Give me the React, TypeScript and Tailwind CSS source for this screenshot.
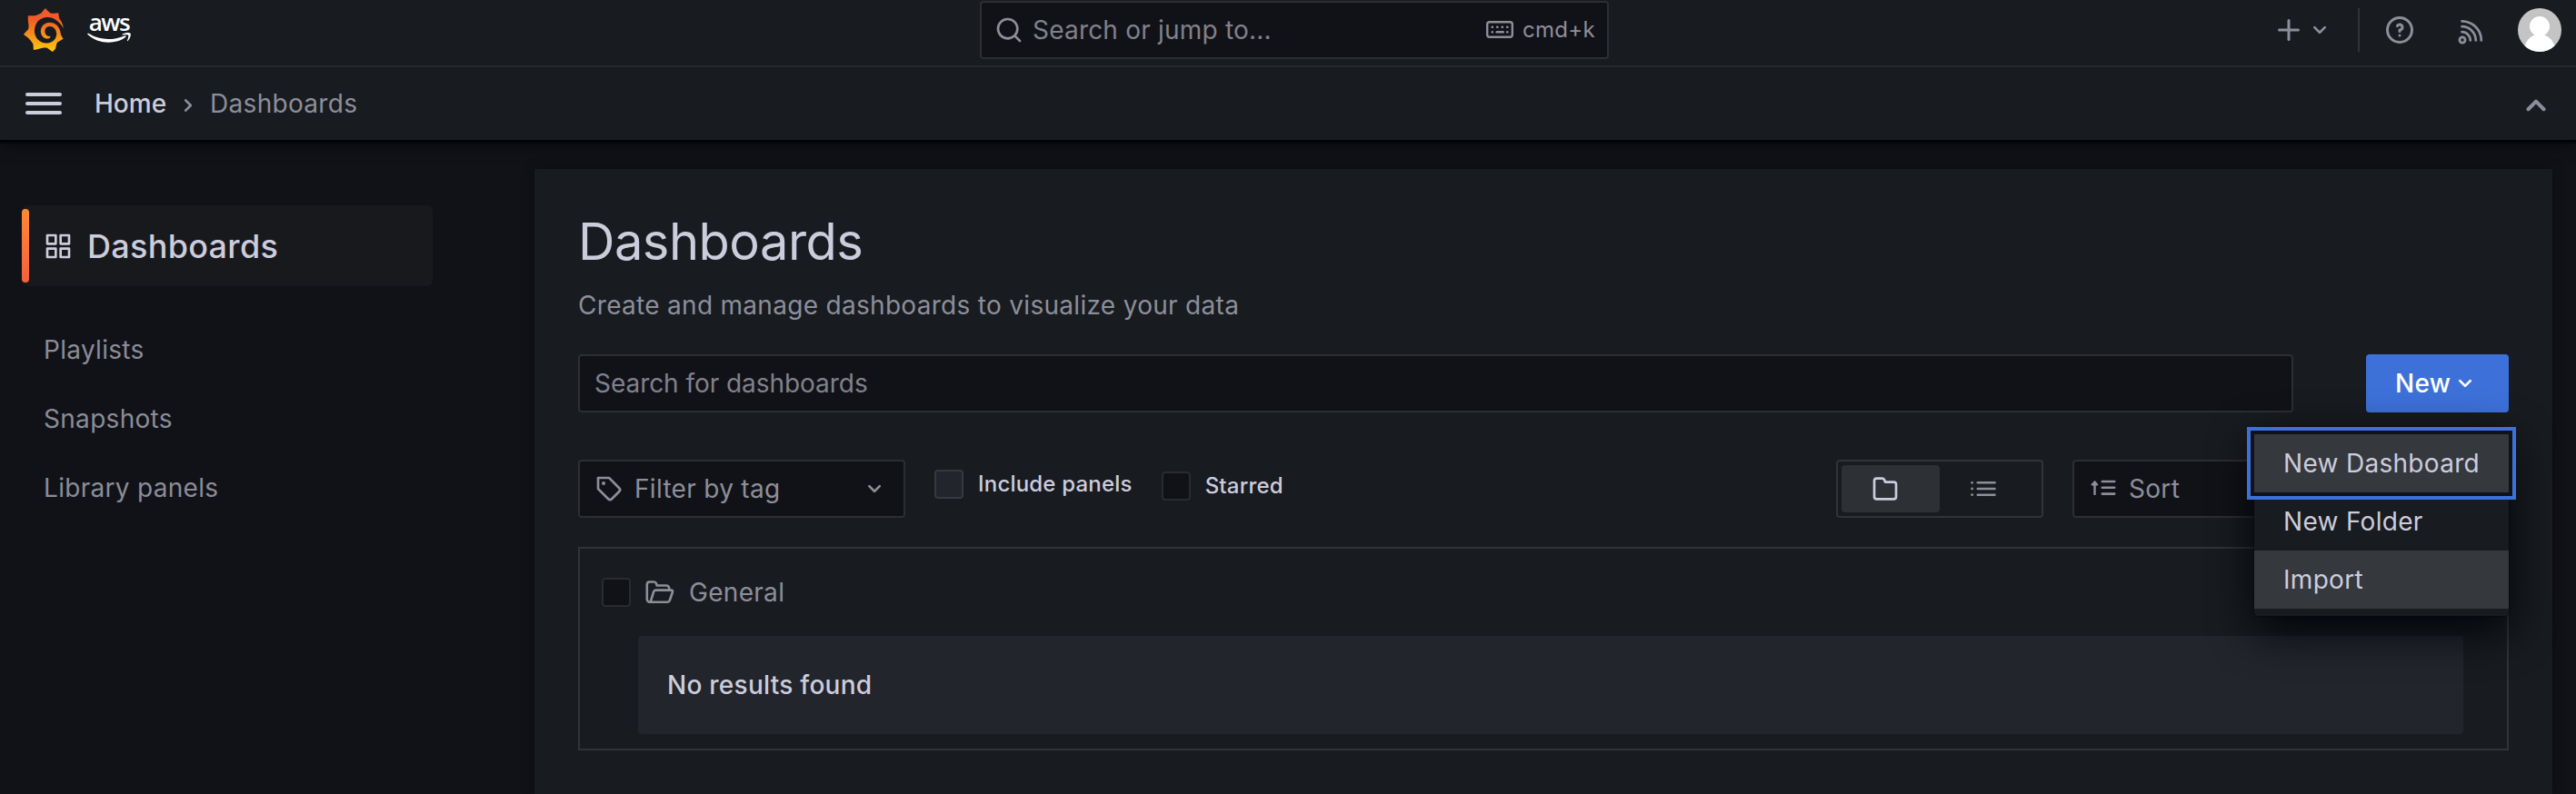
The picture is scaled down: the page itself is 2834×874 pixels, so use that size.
import React from "react";

function Uil({ d, size, className = "" }: { d: string; size: number; className?: string }) {
  return (
    <svg viewBox="0 0 24 24" width={size} height={size} fill="currentColor" className={"shrink-0 " + className}>
      <path d={d} />
    </svg>
  );
}

const P = {
  down: "M17,9.17a1,1,0,0,0-1.41,0L12,12.71,8.46,9.17a1,1,0,0,0-1.41,0,1,1,0,0,0,0,1.42l4.24,4.24a1,1,0,0,0,1.42,0L17,10.59A1,1,0,0,0,17,9.17Z",
  up: "M17,13.41,12.71,9.17a1,1,0,0,0-1.42,0L7.05,13.41a1,1,0,0,0,0,1.42,1,1,0,0,0,1.41,0L12,11.29l3.54,3.54a1,1,0,0,0,.7.29,1,1,0,0,0,.71-.29A1,1,0,0,0,17,13.41Z",
  right: "M14.83,11.29,10.59,7.05a1,1,0,0,0-1.42,0,1,1,0,0,0,0,1.41L12.71,12,9.17,15.54a1,1,0,0,0,0,1.41,1,1,0,0,0,.71.29,1,1,0,0,0,.71-.29l4.24-4.24A1,1,0,0,0,14.83,11.29Z",
  search: "M21.71,20.29,18,16.61A9,9,0,1,0,16.61,18l3.68,3.68a1,1,0,0,0,1.42,0A1,1,0,0,0,21.71,20.29ZM11,18a7,7,0,1,1,7-7A7,7,0,0,1,11,18Z",
  plus: "M19,11H13V5a1,1,0,0,0-2,0v6H5a1,1,0,0,0,0,2h6v6a1,1,0,0,0,2,0V13h6a1,1,0,0,0,0-2Z",
  question: "M11.29,15.29a1.58,1.58,0,0,0-.12.15.76.76,0,0,0-.09.18.64.64,0,0,0-.06.18,1.36,1.36,0,0,0,0,.2.84.84,0,0,0,.08.38.9.9,0,0,0,.54.54.94.94,0,0,0,.76,0,.9.9,0,0,0,.54-.54A1,1,0,0,0,13,16a1,1,0,0,0-.29-.71A1,1,0,0,0,11.29,15.29ZM12,2A10,10,0,1,0,22,12,10,10,0,0,0,12,2Zm0,18a8,8,0,1,1,8-8A8,8,0,0,1,12,20ZM12,7A3,3,0,0,0,9.4,8.5a1,1,0,1,0,1.73,1A1,1,0,0,1,12,9a1,1,0,0,1,0,2,1,1,0,0,0-1,1v1a1,1,0,0,0,2,0v-.18A3,3,0,0,0,12,7Z",
  apps: "M10,13H3a1,1,0,0,0-1,1v7a1,1,0,0,0,1,1h7a1,1,0,0,0,1-1V14A1,1,0,0,0,10,13ZM9,20H4V15H9ZM21,2H14a1,1,0,0,0-1,1v7a1,1,0,0,0,1,1h7a1,1,0,0,0,1-1V3A1,1,0,0,0,21,2ZM20,9H15V4h5Zm1,4H14a1,1,0,0,0-1,1v7a1,1,0,0,0,1,1h7a1,1,0,0,0,1-1V14A1,1,0,0,0,21,13Zm-1,7H15V15h5ZM10,2H3A1,1,0,0,0,2,3v7a1,1,0,0,0,1,1h7a1,1,0,0,0,1-1V3A1,1,0,0,0,10,2ZM9,9H4V4H9Z",
  tag: "M7.5,6A1.5,1.5,0,1,0,9,7.5,1.5,1.5,0,0,0,7.5,6Zm13.62,4.71L12.71,2.29A1,1,0,0,0,12,2H3A1,1,0,0,0,2,3v9a1,1,0,0,0,.29.71l8.42,8.41a3,3,0,0,0,4.24,0L21.12,15a3,3,0,0,0,0-4.24Zm-1.41,2.82h0l-6.18,6.17a1,1,0,0,1-1.41,0L4,11.59V4h7.59l8.12,8.12a1,1,0,0,1,.29.71A1,1,0,0,1,19.71,13.53Z",
  folder: "M19,5.5H12.72l-.32-1a3,3,0,0,0-2.84-2H5a3,3,0,0,0-3,3v13a3,3,0,0,0,3,3H19a3,3,0,0,0,3-3V8.5A3,3,0,0,0,19,5.5Zm1,13a1,1,0,0,1-1,1H5a1,1,0,0,1-1-1V5.5a1,1,0,0,1,1-1H9.56a1,1,0,0,1,.95.68l.54,1.64A1,1,0,0,0,12,7.5h7a1,1,0,0,1,1,1Z",
};

function GrafanaLogo() {
  return (
    <svg viewBox="0 0 44 48" width="44" height="48" className="shrink-0">
      <defs>
        <linearGradient id="sun" x1="0" y1="48" x2="0" y2="0" gradientUnits="userSpaceOnUse">
          <stop offset="0" stopColor="#FCCA0A" />
          <stop offset="0.75" stopColor="#F15A29" />
          <stop offset="1" stopColor="#F05A28" />
        </linearGradient>
      </defs>
      <path
        fill="url(#sun)"
        d="M24 0 C25.5 2 27.5 4 29.8 5.5 C32.5 6 35.5 5.6 38.4 5.2 C38.6 8 38.8 10 39.6 12 C41.4 14 43.4 18 44 22.5 C42.8 20 40.5 17 37.5 14.6 C33 10.6 27.5 9.3 22.5 10.6 C15 12.5 11.8 19 12 26 C12.3 33 18 38.2 25 38.5 C32 38.7 36.4 33.5 36.2 28 C36 23 32.6 20 28.6 20 C25 20 23.200 22.800 23.400 26 C23.600 29.500 26 31.400 29.200 30.800 C30 32 28.8 33.600 26.5 33.600 C22 33.400 18.8 29.8 18.8 25.4 C18.8 20 23 15.700 28.6 15.700 C35 15.700 39.5 20.4 40.5 26.4 C40.8 29 41.6 31 43.6 33.6 C41.6 35.4 39 36.4 37 37.8 C36 40 35.6 42 35.2 44.4 L32 48 C29.6 46.8 27.6 45 25.2 43.6 C22.5 43.2 19 44 17 44.8 C15 45.4 13 45.6 10.8 46 C10.8 43.5 10.8 41.5 10.2 39 C8.6 36.5 6.8 34.5 4.8 32.6 L0 29 C1.6 26.6 3.6 25 5.2 23 C5.8 20.6 5.6 18 5 15.6 C4.8 13 4.8 10.6 4.8 8.4 C7.6 8.2 10 8.4 12.6 8.2 C15 7.6 17.2 6.6 19.2 5.4 C20.8 3.8 22 1.8 24 0 Z"
      />
    </svg>
  );
}

function AwsLogo() {
  return (
    <div className="flex h-[30px] w-[48px] flex-col items-center">
      <span className="mt-[-6px] h-[24px] font-['Open_Sans',sans-serif] text-[26px] leading-[24px] font-semibold tracking-[-1.5px] text-white">aws</span>
      <svg viewBox="0 0 48 12" width="48" height="12" className="shrink-0">
        <path fill="#fff" d="M0.3 1.2C0.6 0.6 1.2 0.7 1.8 1.1C14 8.6 28 8.6 41 3.4C42.4 2.9 43.2 4 42 5C32 12.600 13 13.500 0.800 2.300C0.300 1.900 0.100 1.600 0.300 1.200Z" />
        <path fill="#fff" d="M38.500 1.700C41.500 -0.300 46.500 -0.300 47.500 0.700C48.500 2 47 7 44.600 9C44 9.400 43.600 9.100 43.900 8.500C44.800 6.500 45.700 3.500 45.200 2.700C44.600 2 41.500 2.200 39 2.500C38.200 2.500 37.900 2.100 38.500 1.700Z" />
      </svg>
    </div>
  );
}

function Keyboard() {
  return (
    <svg viewBox="0 0 30 20" width="30" height="20" className="shrink-0" fill="currentColor">
      <rect x="1.200" y="1.200" width="27.600" height="16.600" rx="2.500" fill="none" stroke="currentColor" strokeWidth="2.400" />
      {[6, 11.5, 17, 22.5].map((x) => (
        <rect key={x} x={x - 0.500} y="5.500" width="2.600" height="2.600" rx="1.200" />
      ))}
      <rect x="5.500" y="11" width="2.600" height="2.600" rx="1.200" />
      <rect x="10.500" y="11" width="9.500" height="2.600" rx="1.200" />
      <rect x="22" y="11" width="2.600" height="2.600" rx="1.200" />
    </svg>
  );
}

function Rss() {
  return (
    <svg viewBox="0 0 28 28" width="28" height="28" fill="none" stroke="currentColor" strokeWidth="2.700" strokeLinecap="round" className="shrink-0">
      <circle cx="5" cy="23" r="3.100" />
      <path d="M4.500 2.300A21.300 21.300 0 0 1 25.800 23.500M4.500 8.200A15.300 15.300 0 0 1 19.800 23.500M4.500 14.200A9.300 9.300 0 0 1 13.800 23.500" />
    </svg>
  );
}

function FolderOpen() {
  return (
    <svg viewBox="0 0 32 26" width="32" height="26" fill="none" stroke="currentColor" strokeWidth="2.600" strokeLinejoin="round" className="shrink-0">
      <path d="M5 23.700C3 23.700 1.800 22.500 1.800 20.500V4.500C1.800 2.800 3 1.500 4.700 1.500H9.500C10.700 1.500 11.600 2.200 12 3.300L12.700 5.500H23C24.800 5.500 26.200 6.800 26.200 8.500V10.500" />
      <path d="M5 23.700H24C25.500 23.700 26.500 22.900 26.900 21.500L30 12.500C30.300 11.400 29.800 10.600 28.600 10.600H11.500C10.300 10.600 9.500 11.200 9.100 12.300L6 22.500C5.800 23.300 5.500 23.700 5 23.700Z" />
    </svg>
  );
}

function ListIcon() {
  return (
    <svg viewBox="0 0 28 18" width="28" height="18" fill="currentColor" className="shrink-0">
      {[1, 7.700, 14.400].map((y) => (
        <g key={y}>
          <circle cx="1.600" cy={y + 1.300} r="1.400" />
          <rect x="6.500" y={y} width="21.300" height="2.600" rx="1.300" />
        </g>
      ))}
    </svg>
  );
}

function SortIcon() {
  return (
    <svg viewBox="0 0 28 18" width="28" height="18" fill="currentColor" className="shrink-0">
      <path d="M3.300 6.500H1.600C0.500 6.500 0.200 5.400 0.900 4.700L3.700 1.700C4.200 1.100 4.900 1.100 5.400 1.700L7.900 4.700C8.600 5.400 8.200 6.500 7.200 6.500H5.700V15.900C5.700 17.500 3.300 17.500 3.300 15.900Z" />
      <rect x="11.500" y="0.700" width="16" height="2.600" rx="1.300" />
      <rect x="11.500" y="7.500" width="16" height="2.600" rx="1.300" />
      <rect x="11.500" y="14.300" width="16" height="2.600" rx="1.300" />
    </svg>
  );
}

function Avatar() {
  return (
    <svg viewBox="0 0 48 48" width="48" height="48" className="shrink-0 rounded-full">
      <rect width="48" height="48" fill="#c4c4c4" />
      <circle cx="24" cy="20" r="11" fill="#fff" />
      <path d="M7 43C10 34 15 29 24 29S38 34 41 43L41 48H7Z" fill="#fff" />
    </svg>
  );
}

function Checkbox({ className = "" }: { className?: string }) {
  return <span className={"size-8 shrink-0 rounded-[4px] border-2 " + className} />;
}

export default function App() {
  return (
    <div className="flex h-[874px] w-[2834px] flex-col overflow-hidden bg-[#111217] font-[Inter,sans-serif] text-[28px] leading-[44px] tracking-[0.300px] text-[#ccccdc]">
      <header className="relative z-10 shrink-0 bg-[#181b1f] shadow-[0_1px_2px_2px_#010409,0_4px_16px_rgba(1,4,9,0.600)]">
        <div className="flex h-[74px] border-b-2 border-[#25282d] pb-[6px] text-[#8d8e9a]">
          <div className="flex w-[1078px] items-center pl-[26px]">
            <GrafanaLogo />
            <div className="ml-[26px]"><AwsLogo /></div>
          </div>
          <div className="mt-px flex h-16 w-[692px] items-center rounded-[4px] border-2 border-[#2d2e34] bg-[#111217] pr-[13px] pl-[14px]">
            <Uil d={P.search} size={32} />
            <span className="ml-[10px] flex-1 tracking-[0.200px] text-[#80818c]">Search or jump to...</span>
            <Keyboard />
            <span className="ml-[10px] text-[24px]">cmd+k</span>
          </div>
          <div className="flex flex-1 items-center justify-end pr-4">
            <Uil d={P.plus} size={36} />
            <Uil d={P.down} size={32} />
            <span className="ml-[26px] h-12 w-0.5 bg-[#303338]" />
            <Uil d={P.question} size={36} className="ml-[26px]" />
            <div className="mt-1 ml-[46px]"><Rss /></div>
            <div className="ml-[38px]"><Avatar /></div>
          </div>
        </div>
        <div className="flex h-20 items-center px-7">
          <div className="flex w-10 flex-col gap-[6px]">
            <span className="h-1 rounded-full bg-[#ccccdc]" />
            <span className="h-1 rounded-full bg-[#ccccdc]" />
            <span className="h-1 rounded-full bg-[#ccccdc]" />
          </div>
          <span className="ml-9 font-medium tracking-normal">Home</span>
          <Uil d={P.right} size={32} className="mt-[3px] ml-2 text-[#8d8e9a]" />
          <span className="ml-2 text-[#8d8e9a]">Dashboards</span>
          <Uil d={P.up} size={48} className="mt-1 mr-[-8px] ml-auto text-[#8d8e9a]" />
        </div>
      </header>

      <div className="flex flex-1">
        <nav className="w-[588px] shrink-0 pt-[72px] pl-6">
          <div className="flex h-[89px] w-[452px] items-center rounded-[6px] bg-[#18191d]">
            <span className="h-[81px] w-2 rounded-full bg-gradient-to-b from-[#ff8833] to-[#f55f3e]" />
            <Uil d={P.apps} size={32} className="ml-4" />
            <span className="ml-4 text-[36px] font-medium">Dashboards</span>
          </div>
          <ul className="mt-[32px] pl-6 text-[#8b8c98]">
            <li className="flex h-[76px] items-center">Playlists</li>
            <li className="flex h-[76px] items-center">Snapshots</li>
            <li className="flex h-[76px] items-center">Library panels</li>
          </ul>
        </nav>

        <main className="mt-8 w-[2220px] bg-[#181b1f] px-12 shadow-[0_0_12px_rgba(1,4,9,0.400)]">
          <h1 className="mt-[46px] text-[56px] leading-[68px] tracking-[-0.500px]">Dashboards</h1>
          <p className="mt-[14px] text-[#8d8e9a]">Create and manage dashboards to visualize your data</p>
          <div className="mt-8 flex justify-between">
            <div className="flex h-16 w-[1887px] items-center rounded-[4px] border-2 border-[#2d2e34] bg-[#111217] px-4 tracking-[-0.050px] text-[#80818c]">
              Search for dashboards
            </div>
            <div className="relative">
              <button className="flex h-16 w-[157px] items-center rounded-[4px] bg-[#3d71d9] pl-8 font-medium text-white">
                New
                <Uil d={P.down} size={32} />
              </button>
              <div className="absolute top-[80px] right-0 z-20 w-[280px] rounded-[4px] bg-[#181b1f] py-2 shadow-[0_0_0_1px_rgba(1,4,9,0.300),0_16px_48px_#010409]">
                <div className="flex h-16 items-center bg-[#35383d] pl-8 outline-4 outline-offset-4 outline-[#3d71d9] shadow-[0_0_0_4px_#111217]">New Dashboard</div>
                <div className="flex h-16 items-center pl-8">New Folder</div>
                <div className="flex h-16 items-center bg-[#35383d] pl-8">Import</div>
              </div>
            </div>
          </div>

          <div className="mt-[52px] flex h-16">
            <div className="flex w-[360px] items-center rounded-[4px] border-2 border-[#2d2e34] bg-[#111217] px-4 text-[#8d8e9a]">
              <Uil d={P.tag} size={32} />
              <span className="ml-3 flex-1">Filter by tag</span>
              <Uil d={P.down} size={32} />
            </div>
            <label className="mt-[11px] ml-8 flex h-8 items-center text-[24px] font-medium tracking-[0.200px]">
              <Checkbox className="border-[#36393e] bg-[#22252b]" />
              <span className="ml-4">Include panels</span>
            </label>
            <label className="mt-[13px] ml-8 flex h-8 items-center text-[24px] font-medium tracking-[0.200px]">
              <Checkbox className="border-[#2a2b31] bg-[#111217]" />
              <span className="ml-4">Starred</span>
            </label>
            <div className="ml-auto flex w-[228px] items-center rounded-[4px] border-2 border-[#303338] p-1">
              <div className="flex h-[52px] w-[108px] items-center rounded-[4px] bg-[#2d3035] pl-8">
                <Uil d={P.folder} size={32} />
              </div>
              <div className="ml-[34px] text-[#8d8e9a]"><ListIcon /></div>
            </div>
            <div className="ml-8 flex w-[480px] items-center rounded-[4px] border-2 border-[#2d2e34] bg-[#111217] pl-[18px] text-[#8d8e9a]">
              <div className="mt-[-3px]"><SortIcon /></div>
              <span className="ml-[14px]">Sort</span>
            </div>
          </div>

          <section className="mt-8 h-[224px] border-2 border-[#303338] pl-6">
            <div className="mt-[32px] flex h-8 items-center text-[#8d8e9a]">
              <Checkbox className="border-[#2a2b31] bg-[#111217]" />
              <div className="ml-4"><FolderOpen /></div>
              <span className="ml-4">General</span>
            </div>
            <div className="mt-8 ml-10 flex h-[108px] w-[2008px] items-center rounded-[4px] bg-[#22252b] pl-8 font-medium tracking-[0.250px]">
              No results found
            </div>
          </section>
        </main>
      </div>
    </div>
  );
}
